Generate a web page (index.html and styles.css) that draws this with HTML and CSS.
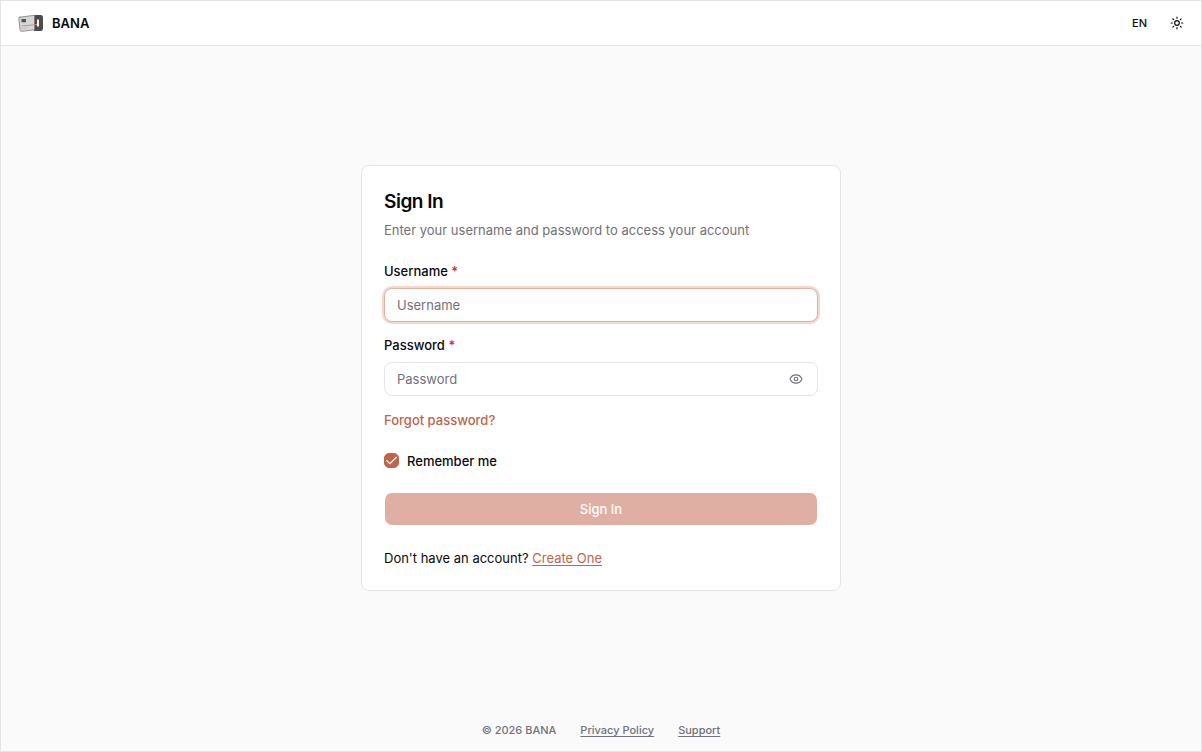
FILE: index.html
```html
<!DOCTYPE html>
<html lang="en">

<head>
    <meta charset="UTF-8">
    <meta name="viewport" content="width=device-width, initial-scale=1.0">
    <title>Sign In - BANA</title>
    <link rel="stylesheet" href="styles.css">
</head>

<body>
    <div class="page">
        <header class="header">
            <a class="brand" href="#">
                <svg class="brand-logo" viewBox="0 0 26 20" aria-hidden="true">
                    <path d="M16 2H23a2.200 2.200 0 0 1 2 2.200v11.600a2.200 2.200 0 0 1-2 2.200H16z" fill="#4c4c4c" />
                    <path d="M2 4.200 16.500 2.300V16.800L3.800 18.300Q2.300 18.400 2.100 17L.8 5.700Q.7 4.400 2 4.200z" fill="#d6d6d6" stroke="#777" stroke-width=".8" />
                    <rect x="3.500" y="6" width="4.500" height="3.200" rx=".5" fill="#4b5552" />
                    <path d="M4 13 19.500 11.500" stroke="#e2857e" stroke-width="1" />
                    <path d="M5 15.500 10 15" stroke="#bbb" stroke-width=".8" />
                    <rect x="19" y="6.500" width="2" height="7" rx=".5" fill="#fff" />
                </svg>
                <span>BANA</span>
            </a>
            <div class="header-actions">
                <button class="lang-button" type="button">EN</button>
                <button class="icon-button" type="button" aria-label="Toggle theme">
                    <svg class="icon-sun" viewBox="0 0 24 24" aria-hidden="true">
                        <circle cx="12" cy="12" r="4" />
                        <path d="M12 2v2M12 20v2M4.900 4.900l1.400 1.400M17.700 17.700l1.400 1.400M2 12h2M20 12h2M6.300 17.700l-1.400 1.400M19.100 4.900l-1.400 1.400" />
                    </svg>
                </button>
            </div>
        </header>

        <main class="main">
            <section class="card">
                <h1 class="card-title">Sign In</h1>
                <p class="card-description">Enter your username and password to access your account</p>

                <form class="form">
                    <div class="field">
                        <label for="username">Username <span class="required">*</span></label>
                        <input class="input input-active" id="username" type="text" placeholder="Username">
                    </div>
                    <div class="field">
                        <label for="password">Password <span class="required">*</span></label>
                        <div class="password-box">
                            <input class="input" id="password" type="password" placeholder="Password">
                            <button class="password-toggle" type="button" aria-label="Show password">
                                <svg viewBox="0 0 24 24" aria-hidden="true">
                                    <path d="M2 12.300a1 1 0 0 1 0-.7 10.800 10.800 0 0 1 20 0 1 1 0 0 1 0 .7 10.800 10.800 0 0 1-20 0z" />
                                    <circle cx="12" cy="12" r="3" />
                                </svg>
                            </button>
                        </div>
                    </div>
                    <a class="forgot-link" href="#">Forgot password?</a>
                    <div class="remember">
                        <span class="checkbox">
                            <input id="remember" type="checkbox" checked>
                            <svg viewBox="0 0 24 24" aria-hidden="true">
                                <path d="M21 6 9 18l-6-6" />
                            </svg>
                        </span>
                        <label for="remember">Remember me</label>
                    </div>
                    <button class="submit-button" type="submit" disabled>Sign In</button>
                </form>

                <p class="signup">Don't have an account? <a href="#">Create One</a></p>
            </section>
        </main>

        <footer class="footer">
            <span>© 2026 BANA</span>
            <a href="#">Privacy Policy</a>
            <a href="#">Support</a>
        </footer>
    </div>
</body>

</html>
```
FILE: styles.css
```css
* {
    box-sizing: border-box;
}

body {
    margin: 0;
    background: #fafafa;
    color: #09090b;
    font-family: Inter, "Liberation Sans", sans-serif;
    font-size: 13px;
    line-height: 20px;
}

h1,
p {
    margin: 0;
}

button,
input {
    font: inherit;
    color: inherit;
}

button {
    padding: 0;
    border: 0;
    background: none;
    cursor: pointer;
}

svg {
    display: block;
    fill: none;
    stroke-linecap: round;
    stroke-linejoin: round;
}

.page {
    display: flex;
    flex-direction: column;
    min-height: 100vh;
    border: 1px solid #e4e4e7;
}

.header {
    display: flex;
    align-items: center;
    justify-content: space-between;
    height: 45px;
    padding: 0 16px 0 17px;
    border-bottom: 1px solid #e4e4e7;
    background: #fff;
}

.brand {
    display: flex;
    align-items: center;
    gap: 8px;
    color: inherit;
    font-weight: 600;
    text-decoration: none;
}

.brand-logo {
    width: 26px;
    height: 20px;
}

.header-actions {
    display: flex;
    align-items: center;
    gap: 14px;
}

.lang-button {
    padding: 0 8px;
    font-size: 11px;
    font-weight: 500;
}

.icon-button {
    width: 16px;
    height: 16px;
}

.icon-sun {
    width: 14px;
    height: 14px;
    margin: auto;
    stroke: currentColor;
    stroke-width: 2;
}

.main {
    display: flex;
    flex: 1;
    align-items: center;
    justify-content: center;
}

.card {
    width: 100%;
    max-width: 480px;
    padding: 22px;
    border: 1px solid #e4e4e7;
    border-radius: 8px;
    background: #fff;
}

.card-title {
    font-size: 19px;
    font-weight: 600;
    line-height: 28px;
    letter-spacing: -0.025em;
}

.card-description {
    margin-top: 4px;
    color: #71717a;
}

.form {
    display: flex;
    flex-direction: column;
    margin-top: 21px;
}

.field {
    margin-bottom: 13px;
}

.field label,
.remember label {
    display: block;
    font-weight: 500;
}

.field label {
    margin-bottom: 7px;
}

.required {
    color: #dc1f26;
}

.input {
    display: block;
    width: 100%;
    height: 34px;
    padding: 0 12px;
    border: 1px solid #e4e4e7;
    border-radius: 8px;
    background: #fff;
    outline: none;
}

.input::placeholder {
    color: #71717a;
    opacity: 1;
}

.input-active,
.input:focus {
    border-color: #e5af9b;
    box-shadow: 0 0 0 2px #f6d8cb;
}

.password-box {
    position: relative;
}

.password-toggle {
    position: absolute;
    top: 10px;
    right: 15px;
    color: #71717a;
}

.password-toggle svg {
    width: 14px;
    height: 14px;
    stroke: currentColor;
    stroke-width: 2;
}

.forgot-link {
    align-self: flex-start;
    margin-top: 1px;
    color: #c0654a;
    font-weight: 500;
    text-decoration: none;
}

.remember {
    display: flex;
    align-items: center;
    gap: 8px;
    margin: 21px 0;
}

.checkbox {
    display: grid;
    width: 15px;
    height: 15px;
}

.checkbox input,
.checkbox svg {
    grid-area: 1 / 1;
}

.checkbox input {
    width: 15px;
    height: 15px;
    margin: 0;
    border: 1px solid #e4e4e7;
    border-radius: 5px;
    appearance: none;
}

.checkbox input:checked {
    border-color: #c0654a;
    background: #c0654a;
}

.checkbox svg {
    width: 13px;
    height: 13px;
    margin: 1px;
    stroke: #fff;
    stroke-width: 2;
    pointer-events: none;
}

.submit-button {
    height: 34px;
    border: 1px solid transparent;
    border-radius: 8px;
    background: #c2624a;
    background-clip: padding-box;
    color: #fff;
    font-weight: 500;
}

.submit-button:disabled {
    opacity: 0.5;
    cursor: default;
}

.signup {
    margin-top: 22px;
}

.signup a {
    color: #c0654a;
    text-underline-offset: 2px;
}

.footer {
    display: flex;
    justify-content: center;
    gap: 24px;
    padding: 11px 16px;
    color: #71717a;
    font-size: 11px;
    font-weight: 500;
}

.footer a {
    color: inherit;
    text-underline-offset: 2px;
}
```
